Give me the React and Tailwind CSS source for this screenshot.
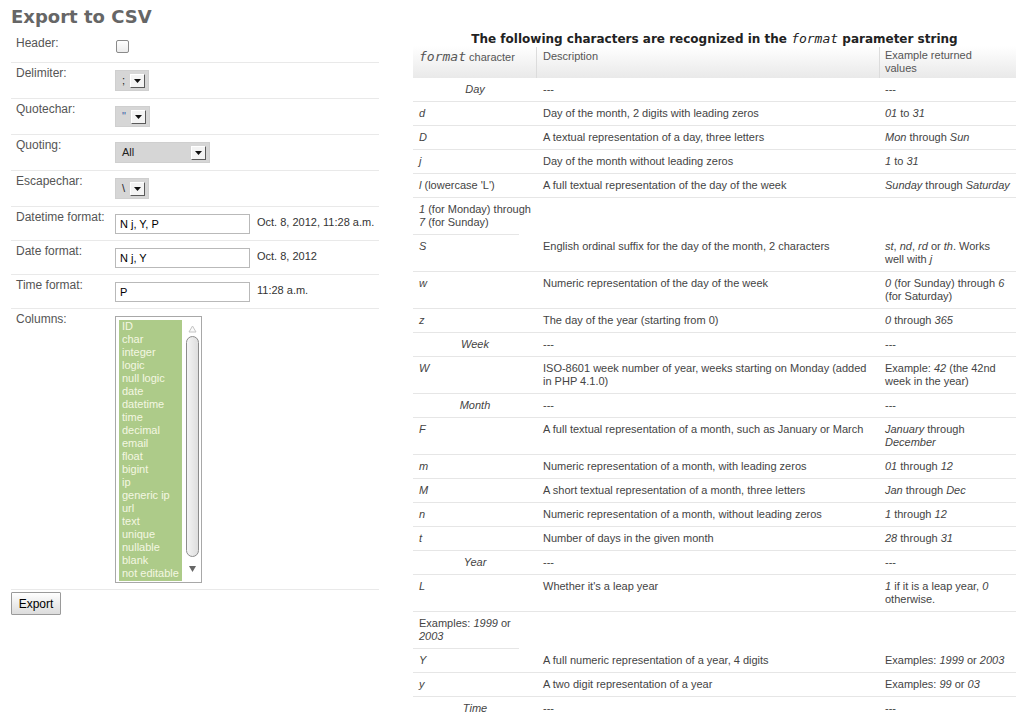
import React from "react";

const I = ({ children }) => <em className="italic">{children}</em>;

const cols = [
  "ID","char","integer","logic","null logic","date","datetime","time","decimal","email",
  "float","bigint","ip","generic ip","url","text","unique","nullable","blank","not editable",
];

function SelectBox({ w, value }) {
  return (
    <div className={`flex items-center h-[21px] bg-[#d6d6d6] border border-[#cfcfcf] pl-[6px] pr-[3px] ${w}`}>
      <span className="text-[11px] leading-[13px] text-[#222]">{value}</span>
      <div className="ml-auto w-[15px] h-[14px] bg-[#f4f4f4] border-t border-l border-t-white border-l-white border-b border-r border-b-[#5a5a5a] border-r-[#5a5a5a] flex items-center justify-center">
        <svg width="7" height="4" viewBox="0 0 7 4"><path d="M0 0H7L3.5 4Z" fill="#111" /></svg>
      </div>
    </div>
  );
}

function FormRow({ label, children, className = "" }) {
  return (
    <div className={`flex border-b border-[#e9e9e9] pl-[5px] ${className}`}>
      <div className="w-[99px] pt-[3px] text-[12px] leading-[14px] text-[#555]">{label}</div>
      <div className="flex-1">{children}</div>
    </div>
  );
}

function TextRow({ label, value, display }) {
  return (
    <FormRow label={label} className="h-[34px]">
      <div className="flex mt-[7px]">
        <div className="w-[135px] h-[20px] border border-[#b9b9b9] bg-white pl-[4px] flex items-center text-[11px] text-black">{value}</div>
        <div className="ml-[7px] mt-[1px] text-[11px] leading-[14px] text-[#333]">{display}</div>
      </div>
    </FormRow>
  );
}

const rows = [
  { cat: "Day" },
  { c: <I>d</I>, d: "Day of the month, 2 digits with leading zeros", e: <><I>01</I> to <I>31</I></> },
  { c: <I>D</I>, d: "A textual representation of a day, three letters", e: <><I>Mon</I> through <I>Sun</I></> },
  { c: <I>j</I>, d: "Day of the month without leading zeros", e: <><I>1</I> to <I>31</I></> },
  { c: <><I>l</I> (lowercase 'L')</>, d: "A full textual representation of the day of the week", e: <><I>Sunday</I> through <I>Saturday</I></> },
  { only: <><I>1</I> (for Monday) through<br /><I>7</I> (for Sunday)</> },
  { c: <I>S</I>, d: "English ordinal suffix for the day of the month, 2 characters", e: <><I>st</I>, <I>nd</I>, <I>rd</I> or <I>th</I>. Works<br />well with <I>j</I></> },
  { c: <I>w</I>, d: "Numeric representation of the day of the week", e: <><I>0</I> (for Sunday) through <I>6</I><br />(for Saturday)</> },
  { c: <I>z</I>, d: "The day of the year (starting from 0)", e: <><I>0</I> through <I>365</I></> },
  { cat: "Week" },
  { c: <I>W</I>, d: <>ISO-8601 week number of year, weeks starting on Monday (added<br />in PHP 4.1.0)</>, e: <>Example: <I>42</I> (the 42nd<br />week in the year)</> },
  { cat: "Month" },
  { c: <I>F</I>, d: "A full textual representation of a month, such as January or March", e: <><I>January</I> through<br /><I>December</I></> },
  { c: <I>m</I>, d: "Numeric representation of a month, with leading zeros", e: <><I>01</I> through <I>12</I></> },
  { c: <I>M</I>, d: "A short textual representation of a month, three letters", e: <><I>Jan</I> through <I>Dec</I></> },
  { c: <I>n</I>, d: "Numeric representation of a month, without leading zeros", e: <><I>1</I> through <I>12</I></> },
  { c: <I>t</I>, d: "Number of days in the given month", e: <><I>28</I> through <I>31</I></> },
  { cat: "Year" },
  { c: <I>L</I>, d: "Whether it's a leap year", e: <><I>1</I> if it is a leap year, <I>0</I><br />otherwise.</> },
  { only: <>Examples: <I>1999</I> or<br /><I>2003</I></> },
  { c: <I>Y</I>, d: "A full numeric representation of a year, 4 digits", e: <>Examples: <I>1999</I> or <I>2003</I></> },
  { c: <I>y</I>, d: "A two digit representation of a year", e: <>Examples: <I>99</I> or <I>03</I></> },
  { cat: "Time" },
];

function TRow({ r }) {
  if (r.only) {
    return (
      <div className="w-[106px] border-b border-[#e6e6e6] px-[6px] py-[5px] whitespace-nowrap">{r.only}</div>
    );
  }
  if (r.cat) {
    return (
      <div className="grid grid-cols-[124px_343px_136px] border-b border-[#e6e6e6]">
        <div className="py-[5px] text-center italic">{r.cat}</div>
        <div className="px-[6px] py-[5px]">---</div>
        <div className="px-[5px] py-[5px]">---</div>
      </div>
    );
  }
  return (
    <div className="grid grid-cols-[124px_343px_136px] border-b border-[#e6e6e6] whitespace-nowrap">
      <div className="px-[6px] py-[5px]">{r.c}</div>
      <div className="px-[6px] py-[5px]">{r.d}</div>
      <div className="px-[5px] py-[5px]">{r.e}</div>
    </div>
  );
}

export default function App() {
  return (
    <div className="flex bg-white min-h-[720px] pl-[11px] font-['Liberation_Sans',Arial,sans-serif]">
      {/* Left form */}
      <div className="w-[368px] shrink-0">
        <div className="h-[33px] pt-[6px] text-[18px] leading-[21px] font-bold text-[#666] font-['DejaVu_Sans',sans-serif]">
          Export to CSV
        </div>
        <FormRow label="Header:" className="h-[30px]">
          <div className="mt-[7px] ml-[1px] w-[13px] h-[13px] rounded-[2px] border border-[#8a8a8a] bg-linear-to-b from-white to-[#ececec]" />
        </FormRow>
        <FormRow label="Delimiter:" className="h-[36px]">
          <div className="mt-[7px]"><SelectBox w="w-[34px]" value=";" /></div>
        </FormRow>
        <FormRow label="Quotechar:" className="h-[36px]">
          <div className="mt-[7px]"><SelectBox w="w-[35px]" value={<span className="text-[#3a5fa8]">"</span>} /></div>
        </FormRow>
        <FormRow label="Quoting:" className="h-[36px]">
          <div className="mt-[7px]"><SelectBox w="w-[95px]" value="All" /></div>
        </FormRow>
        <FormRow label="Escapechar:" className="h-[36px]">
          <div className="mt-[7px]"><SelectBox w="w-[34px]" value="\" /></div>
        </FormRow>
        <TextRow label="Datetime format:" value="N j, Y, P" display="Oct. 8, 2012, 11:28 a.m." />
        <TextRow label="Date format:" value="N j, Y" display="Oct. 8, 2012" />
        <TextRow label="Time format:" value="P" display="11:28 a.m." />
        <FormRow label="Columns:" className="h-[281px]">
          <div className="mt-[7px] w-[87px] h-[267px] border border-[#a8a8a8] bg-white flex pl-[3px] pt-[3px]">
            <div className="w-[63px] h-[261px] bg-[#adcb89] pl-[3px] text-[11px] leading-[13px] text-[#f4f7e2] whitespace-nowrap overflow-hidden">
              {cols.map((c) => (
                <div key={c}>{c}</div>
              ))}
            </div>
            <div className="ml-[2px] w-[16px] flex flex-col items-center">
              <svg width="9" height="8" viewBox="0 0 9 8" className="mt-[5px]"><path d="M4.5 1L8 7H1Z" fill="#fafafa" stroke="#c4c4c4" /></svg>
              <div className="mt-[3px] w-[13px] h-[221px] rounded-[7px] border border-[#8c8c8c] bg-linear-to-r from-[#f4f4f4] to-[#dedede]" />
              <svg width="9" height="8" viewBox="0 0 9 8" className="mt-[8px]"><path d="M1 1H8L4.5 7Z" fill="#666" /></svg>
            </div>
          </div>
        </FormRow>
        <button className="mt-[2px] w-[50px] h-[23px] border border-[#9a9a9a] bg-linear-to-b from-white to-[#dcdcdc] text-[12px] text-black rounded-[1px]">
          Export
        </button>
      </div>

      {/* Right table */}
      <div className="ml-[34px] w-[603px] shrink-0 pt-[32px] text-[11px] leading-[13px] text-[#444]">
        <div className="h-[14px] text-center text-[12px] leading-[14px] font-bold text-[#222] font-['DejaVu_Sans',sans-serif] whitespace-nowrap">
          The following characters are recognized in the <code className="font-['DejaVu_Sans_Mono',monospace] italic font-normal text-[13px]">format</code> parameter string
        </div>
        <div className="grid grid-cols-[124px_343px_136px] h-[32px] bg-linear-to-b from-white to-[#e9e9e9] text-[#555]">
          <div className="px-[6px] pt-[3px] border-r border-[#dcdcdc] mt-[1px]">
            <code className="font-['DejaVu_Sans_Mono',monospace] italic text-[13px]">format</code> character
          </div>
          <div className="px-[6px] pt-[3px] border-r border-[#dcdcdc] mt-[1px]">Description</div>
          <div className="px-[5px] pt-[3px]">Example returned<br />values</div>
        </div>
        {rows.map((r, i) => (
          <TRow key={i} r={r} />
        ))}
      </div>
    </div>
  );
}
